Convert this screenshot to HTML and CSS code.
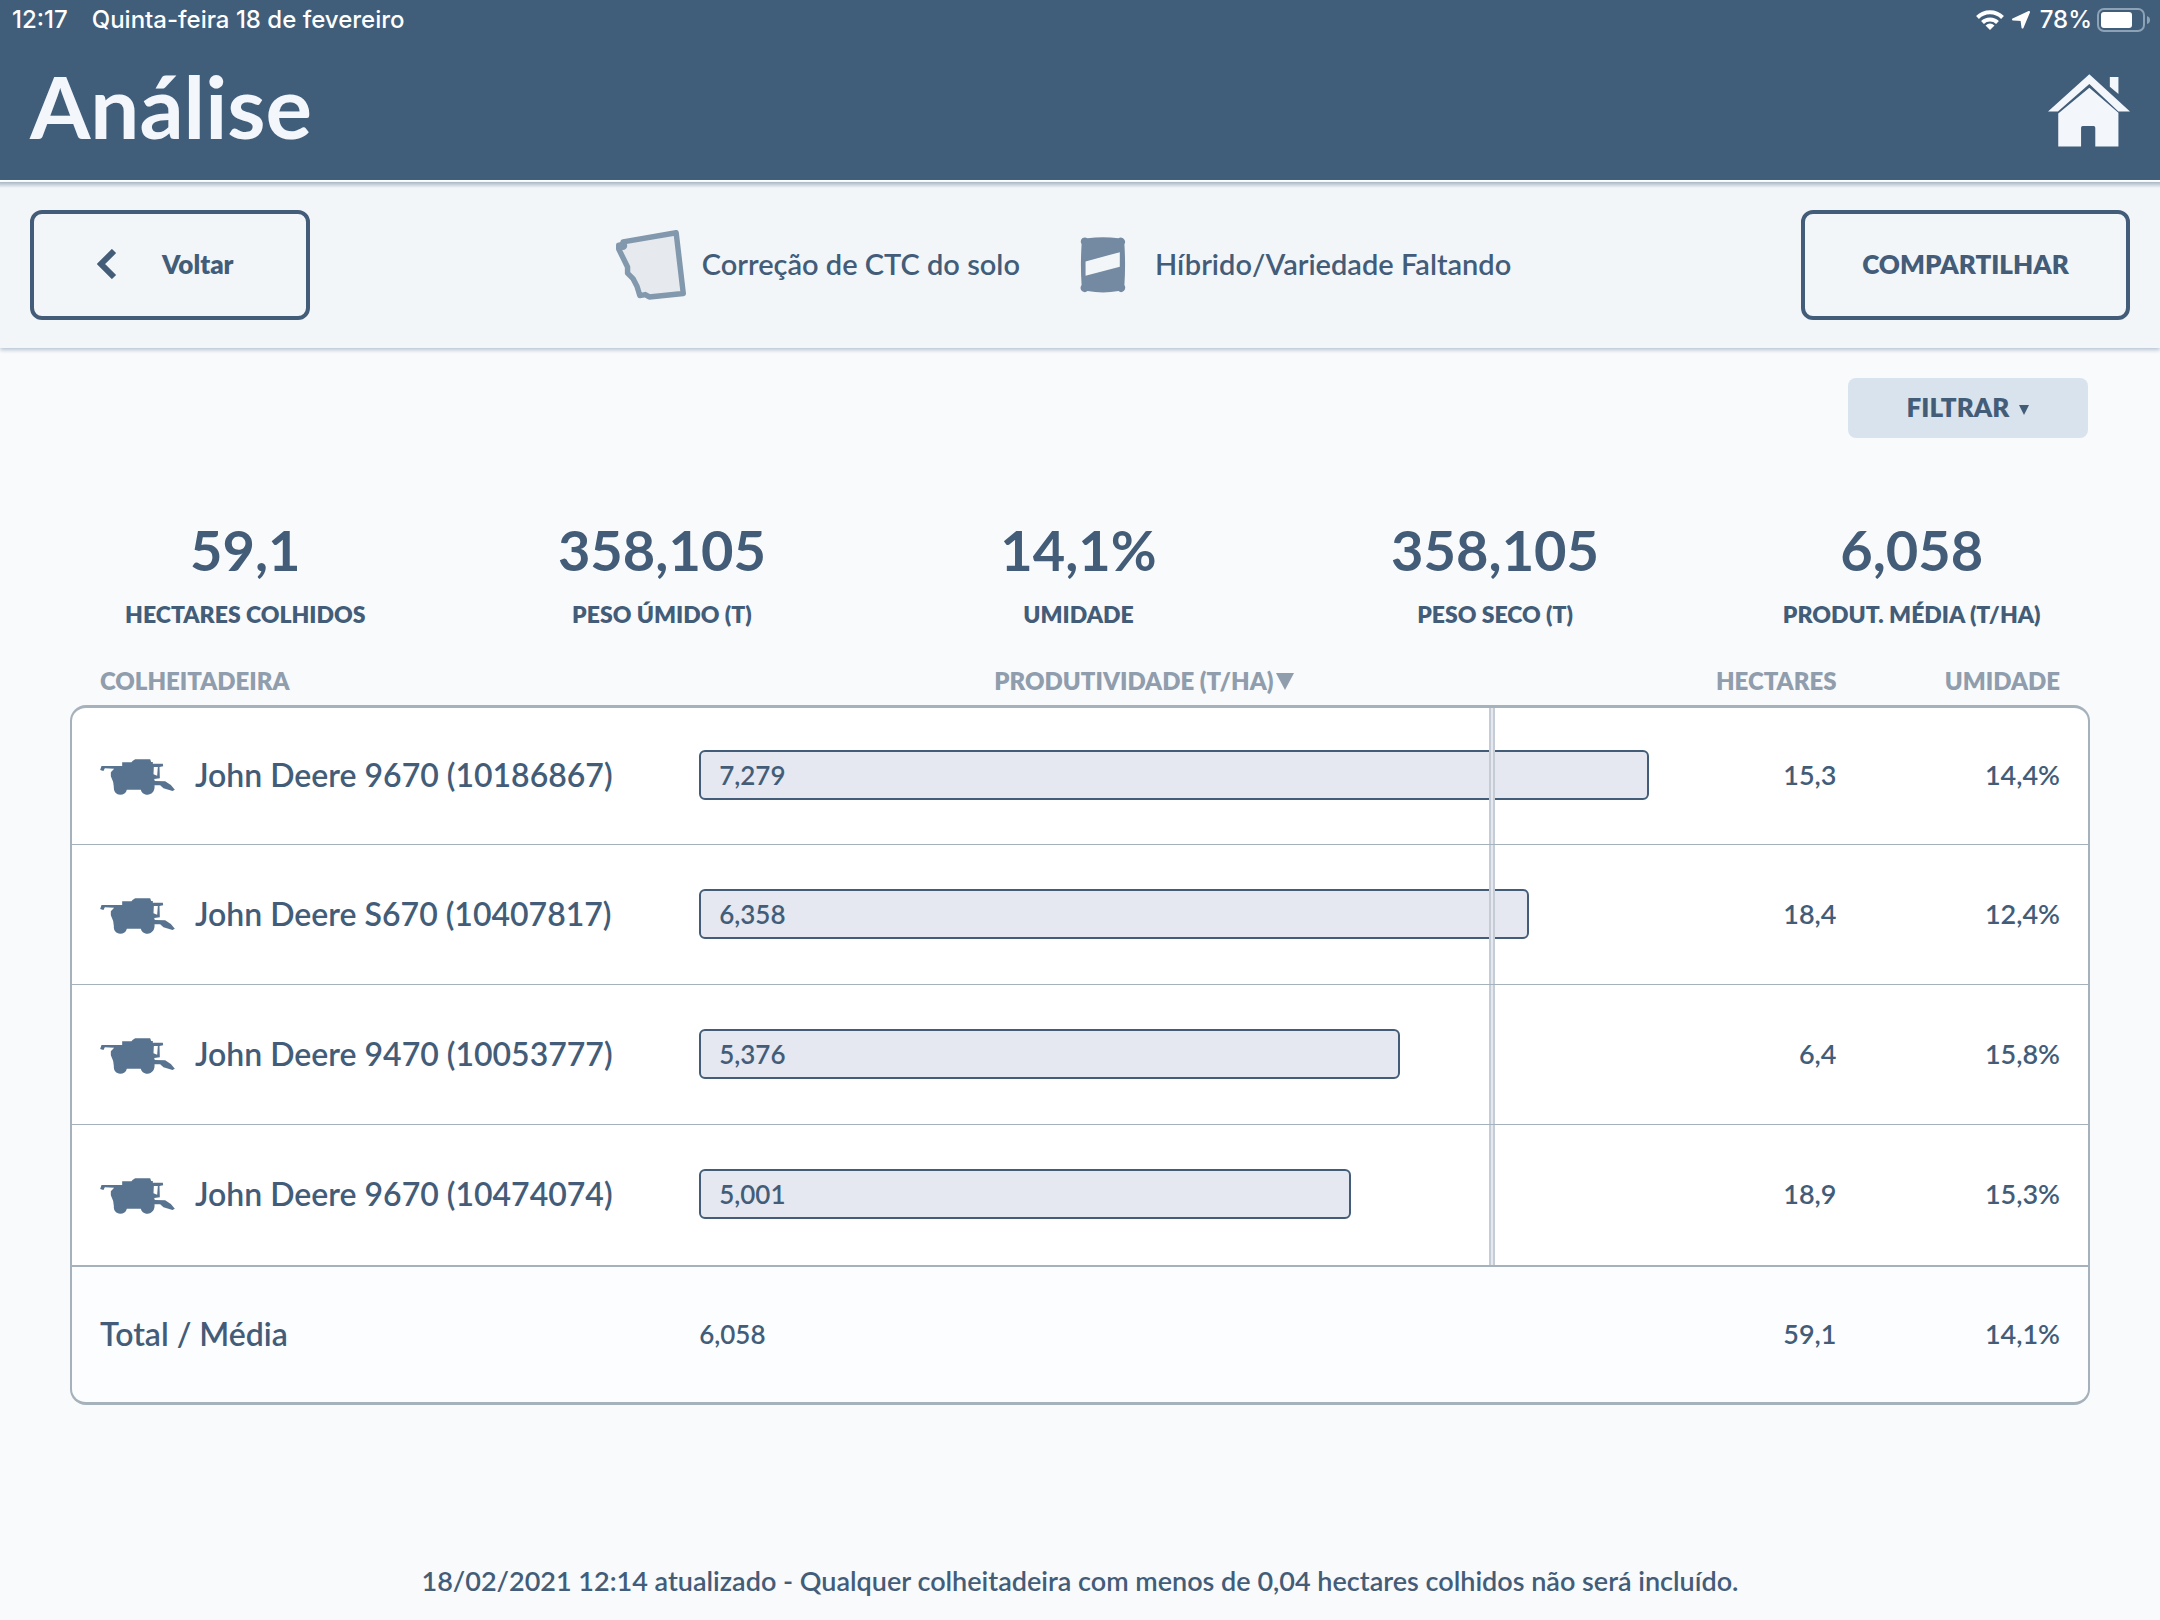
FILE: index.html
```html
<!DOCTYPE html>
<html lang="pt-BR">
<head>
<meta charset="utf-8">
<meta name="viewport" content="width=device-width, initial-scale=1">
<title>Análise</title>
<link rel="stylesheet" href="styles.css">
</head>
<body>
<svg class="defs" aria-hidden="true">
  <symbol id="combine" viewBox="0 0 224 108">
    <path fill-rule="evenodd" d="M4 21H66V10H94L97 6L105 1H150L153 9H158V14H188L189 22L178 24L179 58L162 60L164 66L195 67L212 78L224 92L217 96L190 88L180 79L163 79C165 96 155 107 142 107C130 107 124 100 122 92H80C78 102 70 107 60 107C48 107 40 98 41 84L39 69L32 52V40L42 29L14 28L10 36L0 33Z M161 24L160 46L171 50L173 24Z"/>
  </symbol>
</svg>

<header class="header">
  <div class="status">
    <span class="status-time">12:17</span>
    <span class="status-date">Quinta-feira 18 de fevereiro</span>
    <svg class="wifi" viewBox="0 0 28 20" aria-hidden="true">
      <path fill="none" stroke="#fff" stroke-width="4" d="M1.500 7.500C8.500.5 19.500.5 26.500 7.500M6.500 12.500C10.500 8.500 17.500 8.500 21.500 12.500"/>
      <path fill="#fff" d="M9.500 15.500Q14 11.500 18.500 15.500L14 20Z"/>
    </svg>
    <svg class="location" viewBox="0 0 18 18" aria-hidden="true"><path fill="#fff" stroke="#fff" stroke-width="2" stroke-linejoin="round" d="M17 1L10.500 16.500L9.500 9L1 8.500Z"/></svg>
    <span class="status-charge">78%</span>
    <svg class="battery" viewBox="0 0 54 24" aria-hidden="true">
      <rect x="1" y="1" width="46" height="22" rx="6" fill="none" stroke="#8ea2b5" stroke-width="2"/>
      <rect x="4" y="4" width="31" height="16" rx="3" fill="#fff"/>
      <path d="M50 8Q53 9 53 12T50 16Z" fill="#8ea2b5"/>
    </svg>
  </div>
  <div class="title-row">
    <h1 class="title">Análise</h1>
    <a class="home" href="#" aria-label="Início">
      <svg viewBox="0 0 248 220"><path d="M0 113L125 0L248 113H213L125 30L30 113Z"/><path d="M187 9H213V60L187 38Z"/><path d="M31 119L125 41L213 117V219H143V162Q143 157 138 157H105Q100 157 100 162V219H31Z"/></svg>
    </a>
  </div>
</header>

<nav class="toolbar">
  <button class="button button-back" type="button">
    <svg class="chevron" viewBox="0 0 20 30" aria-hidden="true"><path fill="none" stroke="currentColor" stroke-width="6" d="M17 2L4 15L17 28"/></svg>
    Voltar
  </button>
  <div class="notices">
    <div class="notice">
      <svg class="field" viewBox="0 0 206 204" aria-hidden="true"><path fill="#e6e9ee" stroke="#8298ad" stroke-width="16" stroke-linejoin="round" d="M21 34L177 7L198 186L98 196L86 189L70 192L62 165L50 142L34 126V108L8 55V44L22 45Z"/><circle cx="20" cy="45" r="13" fill="#8298ad"/></svg>
      <span>Correção de CTC do solo</span>
    </div>
    <div class="notice notice-bag">
      <svg class="bag" viewBox="0 0 138 170" aria-hidden="true"><path fill="#738aa2" d="M22 4Q69-2 116 4Q122-1 130 4Q140 12 134 22Q138 85 134 146Q140 156 132 164Q124 171 116 164Q69 173 22 164Q14 171 5 164Q-3 156 4 146Q0 85 4 22Q-2 12 6 4Q14-1 22 4Z"/><path fill="#f3f6f9" d="M16 74L120 46V90L16 118Z"/></svg>
      <span>Híbrido/Variedade Faltando</span>
    </div>
  </div>
  <button class="button button-share" type="button">COMPARTILHAR</button>
</nav>

<main class="main">
  <div class="filter-row">
    <button class="filter" type="button">FILTRAR <svg class="caret" viewBox="0 0 10 10" aria-hidden="true"><path fill="currentColor" d="M0 0H10L5 10Z"/></svg></button>
  </div>

  <dl class="stats">
    <div class="stat"><dd>59,1</dd><dt>HECTARES COLHIDOS</dt></div>
    <div class="stat"><dd>358,105</dd><dt>PESO ÚMIDO (T)</dt></div>
    <div class="stat"><dd>14,1%</dd><dt>UMIDADE</dt></div>
    <div class="stat"><dd>358,105</dd><dt>PESO SECO (T)</dt></div>
    <div class="stat"><dd>6,058</dd><dt>PRODUT. MÉDIA (T/HA)</dt></div>
  </dl>

  <table class="harvest">
    <colgroup><col class="col-name"><col class="col-yield"><col class="col-area"><col class="col-moist"></colgroup>
    <thead>
      <tr><th scope="col" class="name">COLHEITADEIRA</th><th scope="col" class="yield">PRODUTIVIDADE (T/HA)<svg class="sort" viewBox="0 0 18 17" aria-hidden="true"><path fill="currentColor" d="M0 0H18L9 17Z"/></svg></th><th scope="col" class="num">HECTARES</th><th scope="col" class="num">UMIDADE</th></tr>
    </thead>
    <tbody>
      <tr><th scope="row" class="name"><div class="machine"><svg class="combine" aria-hidden="true"><use href="#combine"/></svg>John Deere 9670 (10186867)</div></th><td class="yield"><div class="bar" style="width:100%">7,279</div><div class="average"></div></td><td class="num">15,3</td><td class="num">14,4%</td></tr>
      <tr><th scope="row" class="name"><div class="machine"><svg class="combine" aria-hidden="true"><use href="#combine"/></svg>John Deere S670 (10407817)</div></th><td class="yield"><div class="bar" style="width:87.35%">6,358</div><div class="average"></div></td><td class="num">18,4</td><td class="num">12,4%</td></tr>
      <tr><th scope="row" class="name"><div class="machine"><svg class="combine" aria-hidden="true"><use href="#combine"/></svg>John Deere 9470 (10053777)</div></th><td class="yield"><div class="bar" style="width:73.86%">5,376</div><div class="average"></div></td><td class="num">6,4</td><td class="num">15,8%</td></tr>
      <tr><th scope="row" class="name"><div class="machine"><svg class="combine" aria-hidden="true"><use href="#combine"/></svg>John Deere 9670 (10474074)</div></th><td class="yield"><div class="bar" style="width:68.7%">5,001</div><div class="average"></div></td><td class="num">18,9</td><td class="num">15,3%</td></tr>
    </tbody>
    <tfoot>
      <tr><th scope="row" class="name">Total / Média</th><td class="yield">6,058</td><td class="num">59,1</td><td class="num">14,1%</td></tr>
    </tfoot>
  </table>
</main>

<footer class="footer">18/02/2021 12:14 atualizado - Qualquer colheitadeira com menos de 0,04 hectares colhidos não será incluído.</footer>
</body>
</html>
```

FILE: styles.css
```css
:root {
  --navy: #405d7a;
  --ink: #435d79;
  --line: #a5b1bb;
  --muted: #909dad;
}

* { box-sizing: border-box; }

body {
  display: flex;
  flex-direction: column;
  min-height: 100vh;
  margin: 0;
  background: #f9fafc;
  color: var(--ink);
  font-family: Lato, "Noto Sans", sans-serif;
  font-size: 26px;
  font-weight: 600;
}

button { font: inherit; color: inherit; }

.defs { position: absolute; width: 0; height: 0; }

/* Header */
.header {
  height: 182px;
  background: var(--navy);
  border-bottom: 2px solid #fff;
  color: #f3f6fa;
}

.status {
  display: flex;
  align-items: center;
  height: 40px;
  padding: 0 9px 0 12px;
  color: #fff;
  font: 500 24px/40px Inter, sans-serif;
}
.status-date { margin: 0 auto 0 24px; }
.wifi { width: 28px; height: 20px; margin-right: 8px; }
.location { width: 18px; height: 18px; margin-right: 10px; }
.status-charge { margin-right: 5px; }
.battery { width: 54px; height: 24px; }

.title-row {
  display: flex;
  justify-content: space-between;
  align-items: center;
  height: 140px;
  padding: 0 30px;
}
.title { margin: 0; padding-bottom: 8px; font-size: 87px; line-height: 100px; font-weight: 700; }
.home { width: 82px; height: 73px; }
.home svg { display: block; width: 100%; height: 100%; fill: #f3f6fa; }

/* Toolbar */
.toolbar {
  display: flex;
  justify-content: space-between;
  align-items: center;
  padding: 28px 30px;
  background: linear-gradient(#a9b7c5, #f3f6f9 6px);
  box-shadow: 0 2px 4px #b5c3d1;
}
.button {
  height: 110px;
  padding-bottom: 4px;
  border: 4px solid var(--ink);
  border-radius: 12px;
  background: none;
  font-weight: 800;
}
.button-back {
  display: flex;
  align-items: center;
  width: 280px;
  gap: 45px;
  padding-left: 63px;
}
.chevron { width: 20px; height: 30px; }
.button-share { width: 329px; }

.notices { display: flex; gap: 60px; margin-left: 16px; font-size: 29px; line-height: 36px; }
.notice { display: flex; align-items: center; gap: 16px; }
.notice span { padding-bottom: 2px; }
.notice-bag { gap: 29px; }
.field { width: 70px; height: 70px; }
.bag { width: 46px; height: 56px; }

/* Content */
.main { padding: 30px 70px 0; }

.filter-row { display: flex; justify-content: flex-end; padding-right: 2px; }
.filter {
  width: 240px;
  height: 60px;
  padding-bottom: 3px;
  border: 0;
  border-radius: 8px;
  background: #d9e3ed;
  font-weight: 800;
}
.caret { width: 10px; height: 10px; margin: 0 0 2px 4px; }

.stats {
  display: grid;
  grid-template-columns: repeat(5, 1fr);
  margin: 76px -30px 0 -33px;
  text-align: center;
}
.stat { display: flex; flex-direction: column; gap: 14px; }
.stat dd { margin: 0; font-size: 56px; line-height: 72px; font-weight: 700; }
.stat dt { font-size: 23px; line-height: 28px; font-weight: 800; }

.harvest {
  width: 100%;
  margin-top: 24px;
  table-layout: fixed;
  border-collapse: separate;
  border-spacing: 0;
  line-height: 32px;
  text-align: left;
}
.col-name { width: 31.15%; }
.col-yield { width: 47%; }
.col-area { width: 9.3%; }
.harvest th, .harvest td { padding: 0; font-weight: 600; }
.harvest .name { padding-left: 28px; }
.harvest .num { font-size: 27px; text-align: right; }
.harvest .num:last-child { padding-right: 28px; }

.harvest thead th, .harvest thead .num {
  height: 53px;
  padding-top: 4px;
  color: var(--muted);
  font-size: 24px;
  font-weight: 800;
}
.harvest thead .name { padding-left: 30px; }
.harvest thead .num:last-child { padding-right: 30px; }
.harvest thead .yield { padding-right: 60px; text-align: center; }
.sort { width: 18px; height: 17px; margin-left: 2px; }

.harvest tbody th, .harvest tbody td {
  height: 140px;
  padding-bottom: 2px;
  border-bottom: 1px solid var(--line);
  background: #fff;
}
.harvest tbody tr:first-child > * { border-top: 3px solid var(--line); }
.harvest tbody tr:last-child > * { height: 142px; border-bottom-width: 2px; }
.harvest tfoot th, .harvest tfoot td {
  height: 138px;
  padding-bottom: 2px;
  border-bottom: 3px solid var(--line);
  background: #fcfdff;
}
.harvest tbody tr > :first-child, .harvest tfoot th { border-left: 2px solid var(--line); font-size: 32px; }
.harvest tbody tr > :last-child, .harvest tfoot tr > :last-child { border-right: 2px solid var(--line); }
.harvest tbody tr:first-child > :first-child { border-top-left-radius: 16px; }
.harvest tbody tr:first-child > :last-child { border-top-right-radius: 16px; }
.harvest tfoot tr > :first-child { border-bottom-left-radius: 16px; }
.harvest tfoot tr > :last-child { border-bottom-right-radius: 16px; }

.machine { display: flex; align-items: center; gap: 20px; }
.combine { width: 75px; height: 36px; margin-top: 4px; fill: #587390; }

.harvest tbody .yield { position: relative; }
.bar {
  height: 50px;
  padding-left: 18px;
  border: 2px solid var(--ink);
  border-radius: 6px;
  background: #e5e8f0;
  line-height: 46px;
}
.average {
  position: absolute;
  top: 0;
  bottom: 0;
  left: 83.2%;
  width: 6px;
  border: solid #c5ccd5;
  border-width: 0 2px;
  background: #e5e8ee;
}

.footer { margin-top: auto; padding: 0 30px 22px; font-size: 27px; line-height: 34px; text-align: center; }
```
